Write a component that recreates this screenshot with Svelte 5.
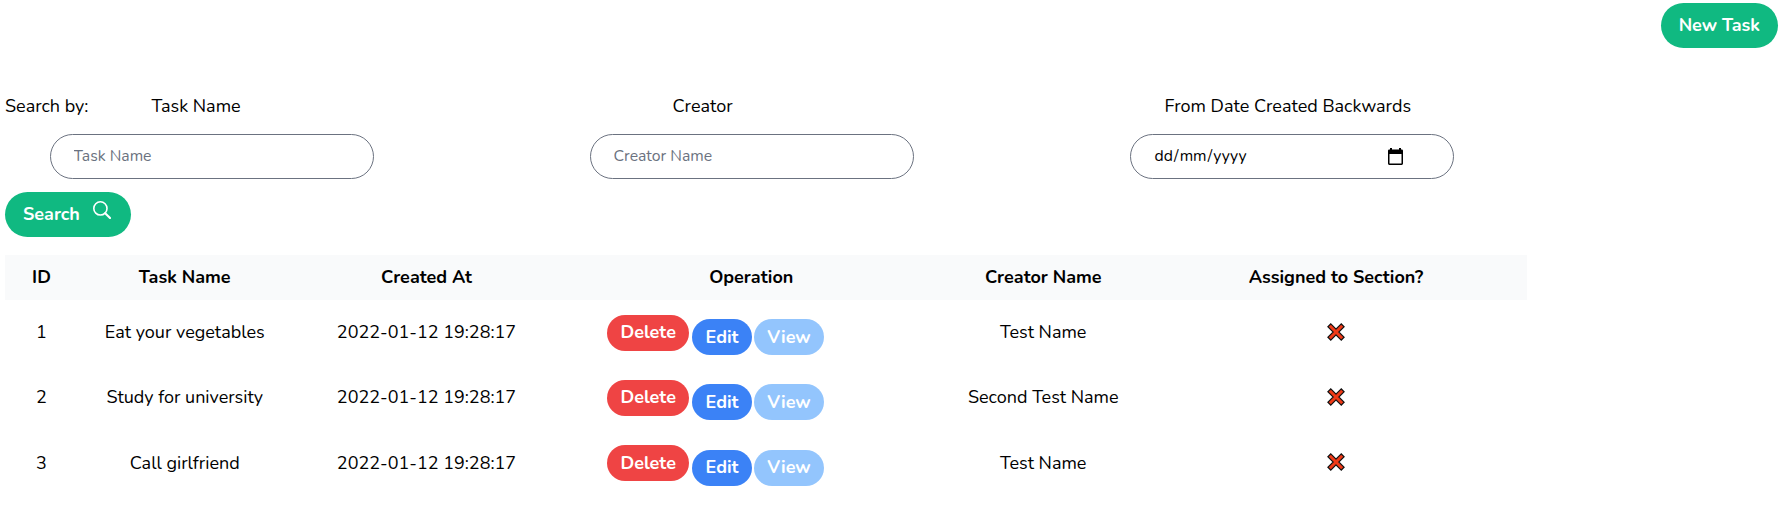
<script>
  const columns = ['ID', 'Task Name', 'Created At', 'Operation', 'Creator Name', 'Assigned to Section?'];
  const tasks = [
    { id: 1, name: 'Eat your vegetables', created: '2022-01-12 19:28:17', creator: 'Test Name' },
    { id: 2, name: 'Study for university', created: '2022-01-12 19:28:17', creator: 'Second Test Name' },
    { id: 3, name: 'Call girlfriend', created: '2022-01-12 19:28:17', creator: 'Test Name' }
  ];
</script>

<div class="page">
  <header><button class="green">New Task</button></header>

  <section class="filters">
    <div class="filter first">
      <div class="caption"><span class="lead">Search by:</span><span>Task Name</span></div>
      <input placeholder="Task Name" aria-label="Task Name" />
    </div>
    <div class="filter creator">
      <div class="caption"><span>Creator</span></div>
      <input placeholder="Creator Name" aria-label="Creator" />
    </div>
    <div class="filter from">
      <div class="caption"><span>From Date Created Backwards</span></div>
      <div class="date">
        <div><span>dd</span>/<span>mm</span>/<span>yyyy</span></div>
        <svg width="15" height="17" viewBox="0 0 15 17">
          <path fill="#000" fill-rule="evenodd" d="M2 0h2v1.6h7V0h2v1.6h.8Q15 1.6 15 2.8v12.8Q15 17 13.7 17H1.3Q0 17 0 15.6V2.8Q0 1.6 1.2 1.6H2zM1.5 6v9.4h12V6z" />
        </svg>
      </div>
    </div>
  </section>

  <button class="green search">
    Search
    <svg width="18" height="18" viewBox="0 0 18 18" fill="none" stroke="#fff">
      <circle cx="7.4" cy="7.4" r="6.6" stroke-width="1.6" />
      <path d="M12.2 12.2 17 17" stroke-width="2.1" stroke-linecap="round" />
    </svg>
  </button>

  <div class="table">
    <div class="row head">
      {#each columns as column}<div>{column}</div>{/each}
    </div>
    {#each tasks as task}
      <div class="row">
        <div>{task.id}</div>
        <div>{task.name}</div>
        <div>{task.created}</div>
        <div class="ops">
          <button class="delete">Delete</button>
          <button class="edit">Edit</button>
          <button class="view">View</button>
        </div>
        <div>{task.creator}</div>
        <div class="mark">
          <svg width="18" height="18" viewBox="0 0 18 18">
            <path d="M1.9 1.9 16.1 16.1M16.1 1.9 1.9 16.1" stroke="#111" stroke-width="5.2" />
            <path d="M2.8 2.8 15.2 15.2M15.2 2.8 2.8 15.2" stroke="#f03a17" stroke-width="3" />
          </svg>
        </div>
      </div>
    {/each}
  </div>
</div>

<style>
  :global(body) { background: #fff; }
  .page {
    box-sizing: border-box;
    height: 520px;
    padding: 3px 5px 0;
    font: 400 18px/27px Nunito, Lato, sans-serif;
    color: #000;
  }
  header { display: flex; justify-content: flex-end; }
  button {
    border: 0;
    margin: 0;
    border-radius: 999px;
    color: #fff;
    font: inherit;
    font-weight: 700;
  }
  .green { display: flex; padding: 9px 18px; background: #10b981; }
  .filters {
    display: grid;
    grid-template-columns: repeat(3, 540px);
    margin: 45px 0 13px;
  }
  .caption { display: flex; height: 27px; margin-bottom: 14px; }
  .lead { width: 146.5px; }
  .creator .caption { padding-left: 127.5px; }
  .from .caption { padding-left: 79.5px; }
  input, .date {
    box-sizing: border-box;
    display: flex;
    width: 324px;
    height: 45px;
    margin: 0 0 0 45px;
    padding: 0 22.5px 1px;
    border: 1px solid #6b7280;
    border-radius: 23px;
    background: #fff;
    font: 400 15.75px/24px Nunito, Lato, sans-serif;
  }
  input::placeholder { color: #6b7280; opacity: 1; }
  .date { align-items: center; justify-content: space-between; padding-right: 50px; }
  .date span { padding: 0 1.1px; }
  .search svg { margin: 0 2px 0 13px; }
  .table { width: 1521.5px; margin-top: 18px; }
  .row {
    display: grid;
    grid-template-columns: 73px 213.5px 270px 379.5px 204.5px 381px;
    height: 65.25px;
    text-align: center;
  }
  .row > div { padding-top: 19px; }
  .head { height: 45px; background: #f9fafb; font-weight: 700; }
  .row.head > div { padding-top: 9px; }
  .row > .ops { display: flex; align-items: flex-start; padding: 14.5px 0 0 45.5px; }
  .ops button { padding: 4.5px 13.5px; }
  .delete { background: #ef4444; }
  .ops .edit { margin: 4.6px 1.8px 0 2.6px; background: #3b82f6; }
  .ops .view { margin-top: 4.6px; background: #93c5fd; }
  .row > .mark { padding-top: 22.5px; }
  .mark svg { display: block; margin: 0 auto; }
</style>
